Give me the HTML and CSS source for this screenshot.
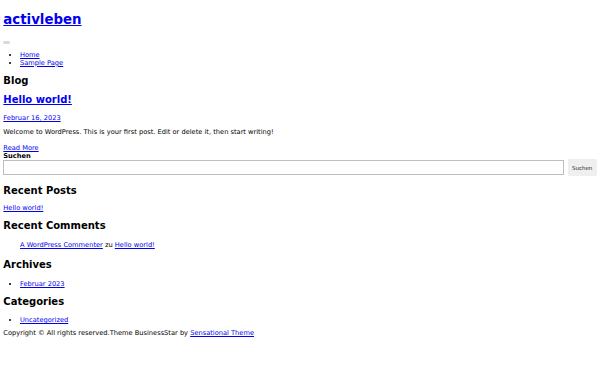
FILE: index.html
```html
<!DOCTYPE html>
<html lang="de">
<head>
  <meta charset="UTF-8" />
  <meta name="viewport" content="width=device-width, initial-scale=1" />
  <title>activleben</title>
  <link rel="stylesheet" href="styles.css">
</head>
<body>
  <header class="site-header">
    <h1 class="site-title"><a href="#">activleben</a></h1>
    <nav class="main-nav">
      <div class="toggle-row"><button class="menu-toggle"></button></div>
      <ul class="menu">
        <li><a href="#">Home</a></li>
        <li><a href="#">Sample Page</a></li>
      </ul>
    </nav>
  </header>

  <main class="site-main">
    <h2 class="page-title">Blog</h2>
    <article class="post">
      <h2 class="entry-title"><a href="#">Hello world!</a></h2>
      <div class="entry-meta"><a href="#">Februar 16, 2023</a></div>
      <p class="entry-summary">Welcome to WordPress. This is your first post. Edit or delete it, then start writing!</p>
      <div class="read-more"><a href="#">Read More</a></div>
    </article>
  </main>

  <aside class="sidebar">
    <form class="search-form">
      <label class="search-label" for="s">Suchen</label>
      <div class="search-row">
        <input class="search-input" id="s" type="search" />
        <button class="search-button" type="button">Suchen</button>
      </div>
    </form>

    <section class="widget">
      <h2 class="widget-title">Recent Posts</h2>
      <ul class="plain-list">
        <li><a href="#">Hello world!</a></li>
      </ul>
    </section>

    <section class="widget">
      <h2 class="widget-title">Recent Comments</h2>
      <ol class="comment-list">
        <li class="comment-item"><a href="#">A WordPress Commenter</a> zu <a href="#">Hello world!</a></li>
      </ol>
    </section>

    <section class="widget">
      <h2 class="widget-title">Archives</h2>
      <ul class="bullet-list">
        <li><a href="#">Februar 2023</a></li>
      </ul>
    </section>

    <section class="widget">
      <h2 class="widget-title">Categories</h2>
      <ul class="bullet-list">
        <li><a href="#">Uncategorized</a></li>
      </ul>
    </section>
  </aside>

  <footer class="site-footer">
    Copyright © All rights reserved.Theme BusinessStar by <a href="#">Sensational Theme</a>
  </footer>
</body>
</html>
```

FILE: styles.css
```css
body {
  margin: 3.33px;
  font-family: "DejaVu Sans", sans-serif;
  font-size: 6.67px;
  color: #000;
  background: #fff;
}
a {
  color: #0000ee;
}
h1 {
  font-size: 2em;
  margin: 0.67em 0;
}
h2 {
  font-size: 1.5em;
  margin: 0.83em 0;
}
.toggle-row {
  height: 8px;
  padding-top: 5px;
  box-sizing: border-box;
}
.menu-toggle {
  display: block;
  width: 7px;
  height: 3px;
  padding: 0;
  border: none;
  border-radius: 1.5px;
  background: #d9d9d9;
}
.menu {
  margin: 1em 0;
  padding-left: 16.67px;
}
.entry-meta {
  margin: 0;
}
.entry-summary {
  margin: 1em 0 0;
}
.read-more {
  margin-top: 8px;
}
.search-form {
  margin: 0;
}
.search-label {
  display: block;
  font-weight: bold;
}
.search-row {
  display: flex;
  align-items: center;
  gap: 4px;
  margin-top: -1px;
}
.search-input {
  flex: 1;
  height: 15px;
  box-sizing: border-box;
  margin: 0;
  border: 1px solid #bdbdbd;
  padding: 0 3px;
}
.search-button {
  width: 29px;
  height: 17px;
  padding: 0;
  border: none;
  border-radius: 1px;
  background: #efefef;
  color: #1e1e1e;
  font-family: "DejaVu Sans", sans-serif;
  font-size: 5.5px;
}
.plain-list {
  list-style: none;
  margin: 1em 0;
  padding: 0;
}
.comment-list {
  list-style: none;
  margin: 1em 0;
  padding-left: 16.67px;
}
.comment-item {
  padding: 1.8px 0;
}
.bullet-list {
  margin: 1em 0 5px;
  padding-left: 16.67px;
}
.bullet-list li {
  padding-top: 1px;
}
.site-footer {
  margin: 0;
}
```
